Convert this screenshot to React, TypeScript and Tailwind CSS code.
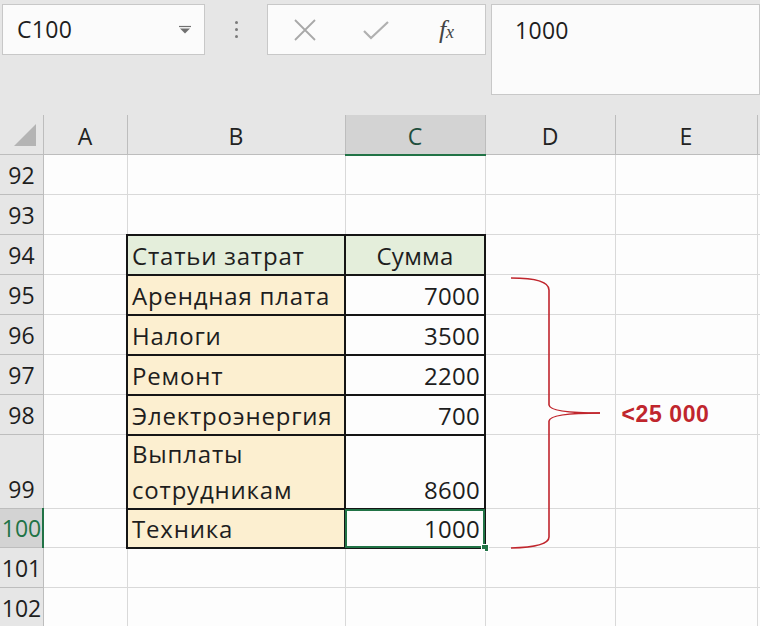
import React from "react";

type Row = {
  n: string;
  h: string;
  b?: string;
  c?: string;
  kind?: "head" | "data";
  sel?: boolean;
  wrap?: boolean;
  e?: string;
};

const rows: Row[] = [
  { n: "92", h: "h-[40px]" },
  { n: "93", h: "h-[40px]" },
  { n: "94", h: "h-[40px]", b: "Статьи затрат", c: "Сумма", kind: "head" },
  { n: "95", h: "h-[40px]", b: "Арендная плата", c: "7000", kind: "data" },
  { n: "96", h: "h-[40px]", b: "Налоги", c: "3500", kind: "data" },
  { n: "97", h: "h-[40px]", b: "Ремонт", c: "2200", kind: "data" },
  { n: "98", h: "h-[40px]", b: "Электроэнергия", c: "700", kind: "data", e: "<25 000" },
  { n: "99", h: "h-[71px]", b: "Выплаты сотрудникам", c: "8600", kind: "data", wrap: true },
  { n: "100", h: "h-[39px]", b: "Техника", c: "1000", kind: "data", sel: true },
  { n: "101", h: "h-[40px]" },
  { n: "102", h: "h-[40px]" },
];

export default function App() {
  const font = { fontFamily: '"Open Sans", "Noto Sans", sans-serif' };
  return (
    <div
      className="w-[760px] h-[626px] bg-[#e6e6e6] overflow-hidden relative text-[#1e1e1e]"
      style={font}
    >
      {/* Formula bar */}
      <div className="h-[115px] flex items-start pt-[4px] pl-[2px]">
        <div className="w-[203px] h-[51px] bg-[#fbfbfb] border border-[#c8c8c8] flex items-center justify-between pl-[14px] pr-[12px]">
          <span className="text-[23px] leading-none tracking-[0.3px]">C100</span>
          <svg width="14" height="10" viewBox="0 0 14 10">
            <line x1="1" y1="1.5" x2="13" y2="1.5" stroke="#707070" strokeWidth="1.2" />
            <path d="M2 3.5 L12 3.5 L7 8.5 Z" fill="#707070" />
          </svg>
        </div>
        <div className="w-[62px] h-[51px] flex flex-col items-center justify-center gap-[4px]">
          <div className="w-[3px] h-[3px] rounded-full bg-[#7a7a7a]" />
          <div className="w-[3px] h-[3px] rounded-full bg-[#7a7a7a]" />
          <div className="w-[3px] h-[3px] rounded-full bg-[#7a7a7a]" />
        </div>
        <div className="w-[219px] h-[51px] bg-[#fbfbfb] border border-[#c8c8c8] flex items-center">
          <div className="w-[72px] flex justify-center pl-[2px]">
            <svg width="26" height="24" viewBox="0 0 26 24">
              <path d="M3 2 L23 22 M23 2 L3 22" stroke="#a8a8a8" strokeWidth="1.8" />
            </svg>
          </div>
          <div className="w-[72px] flex justify-center">
            <svg width="28" height="22" viewBox="0 0 28 22">
              <path d="M2 12 L9 19 L26 3" stroke="#b0b0b0" strokeWidth="2.2" fill="none" />
            </svg>
          </div>
          <div className="flex-1 flex justify-center pr-[4px]">
            <span
              className="text-[26px] italic text-[#444] leading-none"
              style={{ fontFamily: '"Liberation Serif", "DejaVu Serif", serif' }}
            >
              f<span className="text-[18px]">x</span>
            </span>
          </div>
        </div>
        <div className="ml-[5px] flex-1 h-[91px] bg-[#fbfbfb] border border-[#c8c8c8] pl-[23px] pt-[14px]">
          <span className="text-[23px] leading-none tracking-[0.3px]">1000</span>
        </div>
      </div>

      {/* Grid */}
      <table className="table-fixed border-collapse w-[760px]">
        <colgroup>
          <col className="w-[43px]" />
          <col className="w-[84px]" />
          <col className="w-[218px]" />
          <col className="w-[140px]" />
          <col className="w-[130px]" />
          <col className="w-[142px]" />
          <col className="w-[3px]" />
        </colgroup>
        <thead>
          <tr className="h-[39px]">
            <th className="bg-[#e6e6e6] border-r border-b border-[#bdbdbd] p-0 relative">
              <svg width="43" height="39" viewBox="0 0 43 39" className="block">
                <path d="M36 9 L36 31 L14 31 Z" fill="#b4b4b4" />
              </svg>
            </th>
            {["A", "B"].map((l) => (
              <th
                key={l}
                className="bg-[#e6e6e6] border-r border-b border-[#bdbdbd] font-normal text-[23px] text-[#222] p-0 pt-[4px]"
              >
                {l}
              </th>
            ))}
            <th className="bg-[#d3d3d3] border-r border-[#bdbdbd] border-b-2 border-b-[#217346] font-normal text-[23px] text-[#1f4e3d] p-0 pt-[4px]">
              C
            </th>
            {["D", "E"].map((l) => (
              <th
                key={l}
                className="bg-[#e6e6e6] border-r border-b border-[#bdbdbd] font-normal text-[23px] text-[#222] p-0 pt-[4px]"
              >
                {l}
              </th>
            ))}
            <th className="bg-[#e6e6e6] border-b border-[#bdbdbd] p-0" />
          </tr>
        </thead>
        <tbody>
          {rows.map((r) => {
            const bBase =
              r.kind === "head"
                ? "bg-[#e4eedb] border-2 border-[#151515]"
                : r.kind === "data"
                ? "bg-[#fcefd0] border-2 border-[#151515]"
                : "bg-[#fdfdfd] border border-[#d9d9d9]";
            const cBase =
              r.kind === "head"
                ? "bg-[#e4eedb] border-2 border-[#151515]"
                : r.kind === "data"
                ? "bg-[#fdfdfd] border-2 border-[#151515]"
                : "bg-[#fdfdfd] border border-[#d9d9d9]";
            return (
              <tr key={r.n} className={r.h}>
                <td
                  className={
                    r.sel
                      ? "bg-[#d3d3d3] border-b border-[#bdbdbd] border-r-2 border-r-[#217346] text-center text-[23px] text-[#217346] p-0 whitespace-nowrap overflow-visible align-bottom leading-[37px]"
                      : "bg-[#e6e6e6] border-r border-b border-[#bdbdbd] text-center text-[23px] text-[#1e1e1e] p-0 whitespace-nowrap overflow-visible align-bottom leading-[37px]"
                  }
                >
                  <div className="w-[43px] flex justify-center">
                    <span>{r.n}</span>
                  </div>
                </td>
                <td className="bg-[#fdfdfd] border border-[#d9d9d9] p-0" />
                <td
                  className={`${bBase} p-0 pl-[4px] text-[24px] tracking-[0.8px] leading-[37px] align-bottom ${
                    r.wrap ? "whitespace-normal" : "whitespace-nowrap overflow-visible"
                  }`}
                >
                  {r.wrap ? (
                    <div className="leading-[36px]">
                      <div>Выплаты</div>
                      <div>сотрудникам</div>
                    </div>
                  ) : (
                    r.b ?? ""
                  )}
                </td>
                <td
                  className={`${cBase} p-0 text-[24px] tracking-[0.3px] leading-[37px] align-bottom whitespace-nowrap relative ${
                    r.kind === "head" ? "text-center" : "text-right pr-[4px]"
                  }`}
                >
                  {r.c ?? ""}
                  {r.sel && (
                    <>
                      <div className="absolute -left-[1px] -top-[1px] -right-[1px] -bottom-[1px] border-2 border-[#217346] pointer-events-none" />
                      <div className="absolute -right-[5px] -bottom-[5px] w-[8px] h-[8px] bg-[#217346] border border-white" />
                    </>
                  )}
                </td>
                <td className="bg-[#fdfdfd] border border-[#d9d9d9] p-0" />
                <td className="bg-[#fdfdfd] border border-[#d9d9d9] p-0 pl-[6px] align-middle whitespace-nowrap">
                  {r.e && (
                    <span
                      className="text-[23px] font-bold text-[#c0262d] tracking-[0.6px]"
                      style={{ fontFamily: '"Liberation Sans", sans-serif' }}
                    >
                      {r.e}
                    </span>
                  )}
                </td>
                <td className="bg-[#fdfdfd] border-b border-[#d9d9d9] p-0" />
              </tr>
            );
          })}
        </tbody>
      </table>

      {/* Curly bracket annotation */}
      <svg
        className="absolute left-0 top-0 pointer-events-none"
        width="760"
        height="626"
        viewBox="0 0 760 626"
      >
        <path
          d="M511 278 Q549 278 549 290 L549 405 Q550 413 600 413"
          stroke="#c0262d"
          strokeWidth="1.6"
          fill="none"
        />
        <path
          d="M600 413 Q550 413 549 421 L549 537 Q549 547 511 548"
          stroke="#c0262d"
          strokeWidth="1.6"
          fill="none"
        />
      </svg>
    </div>
  );
}
